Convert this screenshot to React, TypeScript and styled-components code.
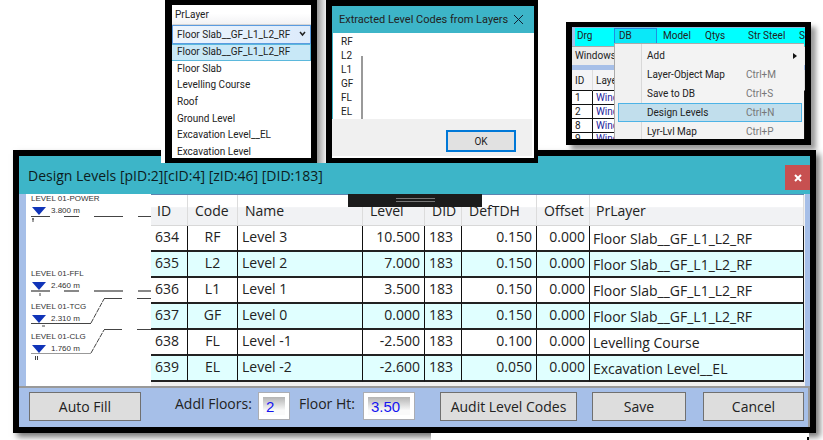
import React from "react";
import styled, { createGlobalStyle } from "styled-components";

const TEAL = "#3db5c8";
const PERIWINKLE = "#a6bfe8";

const GlobalStyle = createGlobalStyle`
  * { box-sizing: border-box; }
  html, body { margin: 0; background: #fff; overflow: hidden; }
  body, button, input, select {
    font-family: "Open Sans", "Noto Sans", sans-serif;
    color: #222;
  }
  button, input, select { margin: 0; padding: 0; border-radius: 0; }
`;

const Desktop = styled.main`
  position: relative;
  padding: 150px 7px 0 13px;
`;

/* ---------- windows floating over the desktop ---------- */

const FloatingWindow = styled.section<{ $left: number; $top: number; $width: number; $height: number }>`
  position: absolute;
  z-index: 2;
  left: ${(p) => p.$left}px;
  top: ${(p) => p.$top}px;
  width: ${(p) => p.$width}px;
  height: ${(p) => p.$height}px;
  background: #fff;
  border: 6px solid #000;
  display: flex;
  flex-direction: column;
  overflow: hidden;
  &, button, select {
    font-family: Roboto, "Open Sans", sans-serif;
    font-size: 10px;
  }
`;

const LayerWindow = styled(FloatingWindow)`
  border-width: 5px 6px 5px 7px;
`;

const CodesWindow = styled(FloatingWindow)`
  border-width: 6px 4px 5px 6px;
`;

const MenuWindow = styled(FloatingWindow)`
  z-index: 0;
  border-width: 5px 6px 6px 6px;
  box-shadow: 5px 5px 5px #999;
`;

const Gutter = styled.div<{ $left: number; $width: number; $shade: string }>`
  position: absolute;
  z-index: 2;
  top: 0;
  left: ${(p) => p.$left}px;
  width: ${(p) => p.$width}px;
  height: 163px;
  background: ${(p) => p.$shade};
`;

const LayerHeading = styled.label`
  flex: none;
  height: 20px;
  padding-left: 3px;
  line-height: 20px;
  background: linear-gradient(#fff 45%, #f2f2f4);
  border-bottom: 1px solid #d5d5d5;
`;

const SelectWrap = styled.div`
  flex: none;
  position: relative;
  height: 19px;
  svg { position: absolute; right: 5px; top: 6px; pointer-events: none; }
`;

const LayerSelect = styled.select`
  appearance: none;
  width: 100%;
  height: 19px;
  padding-left: 4px;
  border: 1px solid #5a9be0;
  background: linear-gradient(90deg, #eef5fd, #dcebfb);
`;

const LayerList = styled.ul`
  flex: 1;
  list-style: none;
  margin: 0 0 -2px;
  padding: 0;
  display: grid;
  grid-auto-rows: 1fr;
`;

const LayerItem = styled.li<{ $selected?: boolean }>`
  display: flex;
  align-items: center;
  padding-left: 5px;
  border: 1px solid ${(p) => (p.$selected ? "#5bb8dc" : "transparent")};
  border-left-width: 0;
  background: ${(p) => (p.$selected ? "#c8e8f7" : "transparent")};
  line-height: 14px;
  white-space: nowrap;
`;

const CodesTitle = styled.header`
  display: flex;
  align-items: center;
  justify-content: space-between;
  height: 27px;
  flex: none;
  padding: 0 10px 0 7px;
  background: ${TEAL};
  font-size: 11px;
  white-space: nowrap;
`;

const IconButton = styled.button`
  display: flex;
  align-items: center;
  justify-content: center;
  border: 0;
  background: none;
`;

const CodesBody = styled.div`
  flex: 1;
  display: flex;
  gap: 8px;
  padding: 2px 0 0 9px;
  border-left: 1px solid ${TEAL};
`;

const CodeList = styled.ul`
  list-style: none;
  width: 12px;
  margin: 0 0 0 -1px;
  padding: 0;
  line-height: 14px;
`;

const CodeBar = styled.div`
  width: 2px;
  margin-top: 21px;
  background: #999;
`;

const CodesFooter = styled.footer`
  height: 37px;
  flex: none;
  margin: 0 2px 2px 0;
  padding: 11px 16px 0 0;
  display: flex;
  justify-content: flex-end;
  background: #f0f0f0;
`;

const OkButton = styled.button`
  width: 70px;
  height: 22px;
  border: 1px solid #0078d7;
  outline: 1px solid #0078d7;
  outline-offset: -2px;
  background: #e1e1e1;
`;

/* ---------- menu window ---------- */

const MenuBar = styled.nav`
  display: flex;
  flex: none;
  height: 19px;
  padding-left: 2px;
  border-top: 1px solid #8cb8dc;
  border-left: 3px solid ${PERIWINKLE};
  background: #00ffff;
`;

const MenuTitle = styled.button<{ $width: number; $open?: boolean }>`
  flex: none;
  width: ${(p) => p.$width}px;
  height: 16px;
  line-height: ${(p) => (p.$open ? 14 : 16)}px;
  padding-left: ${(p) => (p.$open ? 4 : 0)}px;
  border: ${(p) => (p.$open ? "1px solid #1f8fe0" : "0")};
  background: ${(p) => (p.$open ? "#0ae8f8" : "none")};
  text-align: left;
  white-space: nowrap;
`;

const MenuSpacer = styled.span`
  flex: none;
  width: 6px;
`;

const ModuleBar = styled.div`
  flex: none;
  height: 19px;
  padding-left: 3px;
  line-height: 18px;
  background: #ececec;
  border-top: 1px solid #aaa;
`;

const ObjectTable = styled.table`
  border-collapse: separate;
  border-spacing: 0;
  table-layout: fixed;
  width: 100%;
  border-top: 5px solid ${PERIWINKLE};
  th, td {
    height: 14px;
    padding: 0 0 0 3px;
    line-height: 13px;
    text-align: left;
    font-weight: 400;
    border-bottom: 1px solid #111;
    border-right: 1px solid #111;
    white-space: nowrap;
  }
  th { height: 21px; background: #f4f4f6; border-right-color: #ddd; }
  td + td { color: #1c1c9c; }
  tr:last-child td { height: 12px; line-height: 11px; }
`;

const DropMenu = styled.div`
  position: absolute;
  left: 42px;
  right: 1px;
  top: 16px;
  bottom: 0;
  padding: 2px 2px 0 3px;
  border: 1px solid #aaa;
  border-width: 1px 0 0 1px;
  background: linear-gradient(90deg, #f1f1f1 26px, #d8d8d8 26px, #d8d8d8 27px, #f3f3f3 27px);
`;

const DropItem = styled.button<{ $active?: boolean }>`
  display: flex;
  align-items: center;
  width: 100%;
  height: 19px;
  padding: 0 4px 0 28px;
  border: 1px solid ${(p) => (p.$active ? "#4db3e6" : "transparent")};
  background: ${(p) => (p.$active ? "#c1deec" : "none")};
  white-space: nowrap;
`;

const ItemLabel = styled.span`
  flex: 1;
  text-align: left;
`;

const Shortcut = styled.span`
  width: 51px;
  text-align: left;
  color: #777;
`;

/* ---------- design levels dialog ---------- */

const Dialog = styled.section`
  position: relative;
  z-index: 1;
  border: 6px solid #000;
  background: ${PERIWINKLE};
  box-shadow: 4px 4px 6px #777;
`;

const DialogTitle = styled.header`
  display: flex;
  align-items: center;
  justify-content: space-between;
  height: 38px;
  padding-left: 9px;
  background: ${TEAL};
`;

const TitleText = styled.h1`
  margin: 0;
  font-size: 14px;
  font-weight: 400;
  color: #0c1c20;
`;

const CloseButton = styled(IconButton)`
  width: 25px;
  height: 25px;
  margin-top: 5px;
  background: #c75050;
`;

const DialogBody = styled.div`
  position: relative;
  display: flex;
  height: 192px;
  margin: 0 5px 0 7px;
  background: #f0f0f0;
`;

const Drawing = styled.svg`
  flex: none;
  display: block;
  background: #fff;
  font-family: "Liberation Sans", sans-serif;
  font-size: 8px;
`;

const LevelTable = styled.table`
  flex: 1;
  align-self: flex-start;
  margin-right: 1px;
  border-collapse: separate;
  border-spacing: 0;
  table-layout: fixed;
  border-top: 1px solid #5d84b0;
  font-size: 14px;
`;

const LevelHead = styled.th<{ $width?: number; $pad?: number }>`
  width: ${(p) => (p.$width ? `${p.$width}px` : "auto")};
  height: 31px;
  padding: 2px 0 0 ${(p) => p.$pad ?? 7}px;
  font-weight: 400;
  text-align: left;
  line-height: 24px;
  border-right: 1px solid #dcdcdc;
  border-bottom: 1px solid #d8d8d8;
  background: linear-gradient(#fff 40%, #f1f2f4 42%);
  white-space: nowrap;
`;

const LevelRow = styled.tr`
  &:nth-child(even) td { background: #e0ffff; }
`;

const LevelCell = styled.td<{ $align?: "left" | "center" | "right" }>`
  height: 26px;
  padding: 0 4px;
  line-height: 22px;
  vertical-align: top;
  text-align: ${(p) => p.$align ?? "left"};
  background: #fff;
  border-right: 1px solid #111;
  border-bottom: 2px solid #222;
  white-space: nowrap;
  &:last-child {
    padding: 0 3px;
    vertical-align: bottom;
  }
`;

const CaptureTab = styled.div`
  position: absolute;
  left: 322px;
  top: 0;
  width: 134px;
  height: 13px;
  display: flex;
  justify-content: center;
  padding-top: 4px;
  background: #1b1b1b;
`;

const Grip = styled.span`
  width: 39px;
  height: 4px;
  border: 1px solid #777;
  border-width: 1px 0;
`;

const DialogFooter = styled.footer`
  display: flex;
  align-items: flex-start;
  height: 41px;
  padding: 4px 4px 0 10px;
  border-top: 2px solid #999;
  border-right: 2px solid #999;
  font-size: 14px;
`;

const ActionButton = styled.button<{ $width: number; $gap?: number }>`
  flex: none;
  width: ${(p) => p.$width}px;
  height: 29px;
  margin-left: ${(p) => p.$gap ?? 0}px;
  border: 1px solid #707070;
  background: #ddd;
  font-size: 14px;
  line-height: 24px;
`;

const FieldLabel = styled.label<{ $width: number; $gap: number }>`
  flex: none;
  width: ${(p) => p.$width}px;
  margin-left: ${(p) => p.$gap}px;
  line-height: 24px;
  white-space: nowrap;
`;

const FieldBox = styled.div<{ $width: number }>`
  flex: none;
  width: ${(p) => p.$width}px;
  height: 28px;
  padding: 4px;
  border: 1px solid #abadb3;
  background: #fff;
`;

const FieldInput = styled.input`
  display: block;
  width: 100%;
  height: 18px;
  padding-left: 3px;
  border: 0;
  background: linear-gradient(#b4b4b4, #fafafa 75%);
  font-family: "Liberation Sans", sans-serif;
  font-size: 15px;
  color: #1414f0;
`;

const Underpage = styled.div`
  position: relative;
  z-index: 1;
  height: 7px;
  margin: 0 7px 0 418px;
  background: #fff;
  display: flex;
  justify-content: flex-end;
  align-items: flex-end;
`;

const PageEdge = styled.span`
  width: 2px;
  height: 3px;
  background: #000;
`;

const layers = [
  "Floor Slab__GF_L1_L2_RF",
  "Floor Slab",
  "Levelling Course",
  "Roof",
  "Ground Level",
  "Excavation Level__EL",
  "Excavation Level",
];

const codes = ["RF", "L2", "L1", "GF", "FL", "EL"];

const menuItems = [
  { label: "Add", keys: "" },
  { label: "Layer-Object Map", keys: "Ctrl+M" },
  { label: "Save to DB", keys: "Ctrl+S" },
  { label: "Design Levels", keys: "Ctrl+N", active: true },
  { label: "Lyr-Lvl Map", keys: "Ctrl+P" },
];

const levels = [
  ["634", "RF", "Level 3", "10.500", "183", "0.150", "0.000", "Floor Slab__GF_L1_L2_RF"],
  ["635", "L2", "Level 2", "7.000", "183", "0.150", "0.000", "Floor Slab__GF_L1_L2_RF"],
  ["636", "L1", "Level 1", "3.500", "183", "0.150", "0.000", "Floor Slab__GF_L1_L2_RF"],
  ["637", "GF", "Level 0", "0.000", "183", "0.150", "0.000", "Floor Slab__GF_L1_L2_RF"],
  ["638", "FL", "Level -1", "-2.500", "183", "0.100", "0.000", "Levelling Course"],
  ["639", "EL", "Level -2", "-2.600", "183", "0.050", "0.000", "Excavation Level__EL"],
];

const columns: { title: string; width?: number; pad?: number; align?: "left" | "center" | "right" }[] = [
  { title: "ID", width: 37, pad: 6 },
  { title: "Code", width: 50, pad: 7, align: "center" },
  { title: "Name", width: 125 },
  { title: "Level", width: 62, pad: 7, align: "right" },
  { title: "DID", width: 37, pad: 7 },
  { title: "DefTDH", width: 75, align: "right" },
  { title: "Offset", width: 53, pad: 7, align: "right" },
  { title: "PrLayer", pad: 6 },
];

function LevelDrawing() {
  return (
    <Drawing width="125" height="192" viewBox="0 0 125 192">
      <g fill="#333">
        <text x="5" y="7">LEVEL 01-POWER</text>
        <text x="25" y="19">3.800 m</text>
        <text x="5" y="82">LEVEL 01-FFL</text>
        <text x="25" y="94">2.460 m</text>
        <text x="5" y="115">LEVEL 01-TCG</text>
        <text x="25" y="127">2.310 m</text>
        <text x="5" y="145">LEVEL 01-CLG</text>
        <text x="25" y="157">1.760 m</text>
      </g>
      <g fill="#1034b8">
        <path d="M6 13H20L13 21Z" />
        <path d="M6 88H20L13 96Z" />
        <path d="M6 121H20L13 129Z" />
        <path d="M6 151H20L13 159Z" />
      </g>
      <g fill="none" stroke="#444">
        <path d="M5 22.5H24M38 22.5H53M68 22.5H97M112 22.5H125" />
        <path d="M5 97H24M38 97H53M68 97H97M112 97H125" stroke="#888" strokeWidth="2" />
        <path d="M5 129.500H65" />
        <path d="M65 129L78 105" strokeDasharray="5 1" />
        <path d="M78 104.500H96M111 104.500H125" />
        <path d="M5 159.500H65" stroke="#999" />
        <path d="M65 159L78 136" strokeDasharray="5 1" />
        <path d="M78 135.500H96M111 135.500H125" />
        <path d="M6 25H8M7 24V28M14 99V102M16 132H19M9.500 162V166M11.500 162V166" />
      </g>
    </Drawing>
  );
}

export default function App() {
  return (
    <>
      <GlobalStyle />
      <Desktop>
        <Gutter $left={161} $width={4} $shade="#fff" />
        <Gutter $left={317} $width={9} $shade="linear-gradient(90deg, #999, #f0f0f0)" />

        <LayerWindow $left={165} $top={0} $width={152} $height={163}>
          <LayerHeading htmlFor="layer">PrLayer</LayerHeading>
          <SelectWrap>
            <LayerSelect id="layer" defaultValue={layers[0]}>
              {layers.map((name) => (
                <option key={name}>{name}</option>
              ))}
            </LayerSelect>
            <svg width="7" height="6" viewBox="0 0 7 6" fill="none" stroke="#222" strokeWidth="1.5">
              <path d="M1 1L3.500 4L6 1" />
            </svg>
          </SelectWrap>
          <LayerList>
            {layers.map((name, i) => (
              <LayerItem key={name} $selected={i === 0}>
                {name}
              </LayerItem>
            ))}
          </LayerList>
        </LayerWindow>

        <CodesWindow $left={326} $top={0} $width={212} $height={163}>
          <CodesTitle>
            Extracted Level Codes from Layers
            <IconButton aria-label="Close message">
              <svg width="11" height="11" viewBox="0 0 11 11" stroke="#123" fill="none">
                <path d="M1 1L10 10M10 1L1 10" />
              </svg>
            </IconButton>
          </CodesTitle>
          <CodesBody>
            <CodeList>
              {codes.map((code) => (
                <li key={code}>{code}</li>
              ))}
            </CodeList>
            <CodeBar />
          </CodesBody>
          <CodesFooter>
            <OkButton>OK</OkButton>
          </CodesFooter>
        </CodesWindow>

        <MenuWindow $left={566} $top={22} $width={245} $height={123}>
          <MenuBar>
            <MenuTitle $width={37}>Drg</MenuTitle>
            <MenuTitle $width={43} $open>DB</MenuTitle>
            <MenuSpacer />
            <MenuTitle $width={42}>Model</MenuTitle>
            <MenuTitle $width={43}>Qtys</MenuTitle>
            <MenuTitle $width={51}>Str Steel</MenuTitle>
            <MenuTitle $width={6}>S</MenuTitle>
          </MenuBar>
          <ModuleBar>Windows E</ModuleBar>
          <ObjectTable>
            <colgroup>
              <col width="21" />
              <col />
            </colgroup>
            <thead>
              <tr><th>ID</th><th>Layer</th></tr>
            </thead>
            <tbody>
              {["1", "2", "8", "9"].map((id) => (
                <tr key={id}><td>{id}</td><td>Wind</td></tr>
              ))}
            </tbody>
          </ObjectTable>
          <DropMenu>
            {menuItems.map((item) => (
              <DropItem key={item.label} $active={item.active}>
                <ItemLabel>{item.label}</ItemLabel>
                {item.keys ? (
                  <Shortcut>{item.keys}</Shortcut>
                ) : (
                  <svg width="4" height="6" viewBox="0 0 4 6"><path d="M0 0L4 3L0 6Z" fill="#111" /></svg>
                )}
              </DropItem>
            ))}
          </DropMenu>
        </MenuWindow>

        <Dialog>
          <DialogTitle>
            <TitleText>Design Levels [pID:2][cID:4] [zID:46] [DID:183]</TitleText>
            <CloseButton aria-label="Close">
              <svg width="8" height="8" viewBox="0 0 8 8" stroke="#fff" strokeWidth="2" fill="none">
                <path d="M1 1L7 7M7 1L1 7" />
              </svg>
            </CloseButton>
          </DialogTitle>
          <DialogBody>
            <LevelDrawing />
            <LevelTable>
              <thead>
                <tr>
                  {columns.map((c) => (
                    <LevelHead key={c.title} $width={c.width} $pad={c.pad}>{c.title}</LevelHead>
                  ))}
                </tr>
              </thead>
              <tbody>
                {levels.map((row) => (
                  <LevelRow key={row[0]}>
                    {row.map((value, i) => (
                      <LevelCell key={columns[i].title} $align={columns[i].align}>{value}</LevelCell>
                    ))}
                  </LevelRow>
                ))}
              </tbody>
            </LevelTable>
            <CaptureTab>
              <Grip />
            </CaptureTab>
          </DialogBody>
          <DialogFooter>
            <ActionButton $width={112}>Auto Fill</ActionButton>
            <FieldLabel htmlFor="floors" $width={83} $gap={34}>Addl Floors:</FieldLabel>
            <FieldBox $width={32}>
              <FieldInput id="floors" defaultValue="2" />
            </FieldBox>
            <FieldLabel htmlFor="height" $width={64} $gap={9}>Floor Ht:</FieldLabel>
            <FieldBox $width={52}>
              <FieldInput id="height" defaultValue="3.50" />
            </FieldBox>
            <ActionButton $width={137} $gap={25}>Audit Level Codes</ActionButton>
            <ActionButton $width={94} $gap={15}>Save</ActionButton>
            <ActionButton $width={101} $gap={17}>Cancel</ActionButton>
          </DialogFooter>
        </Dialog>
        <Underpage>
          <PageEdge />
        </Underpage>
      </Desktop>
    </>
  );
}
